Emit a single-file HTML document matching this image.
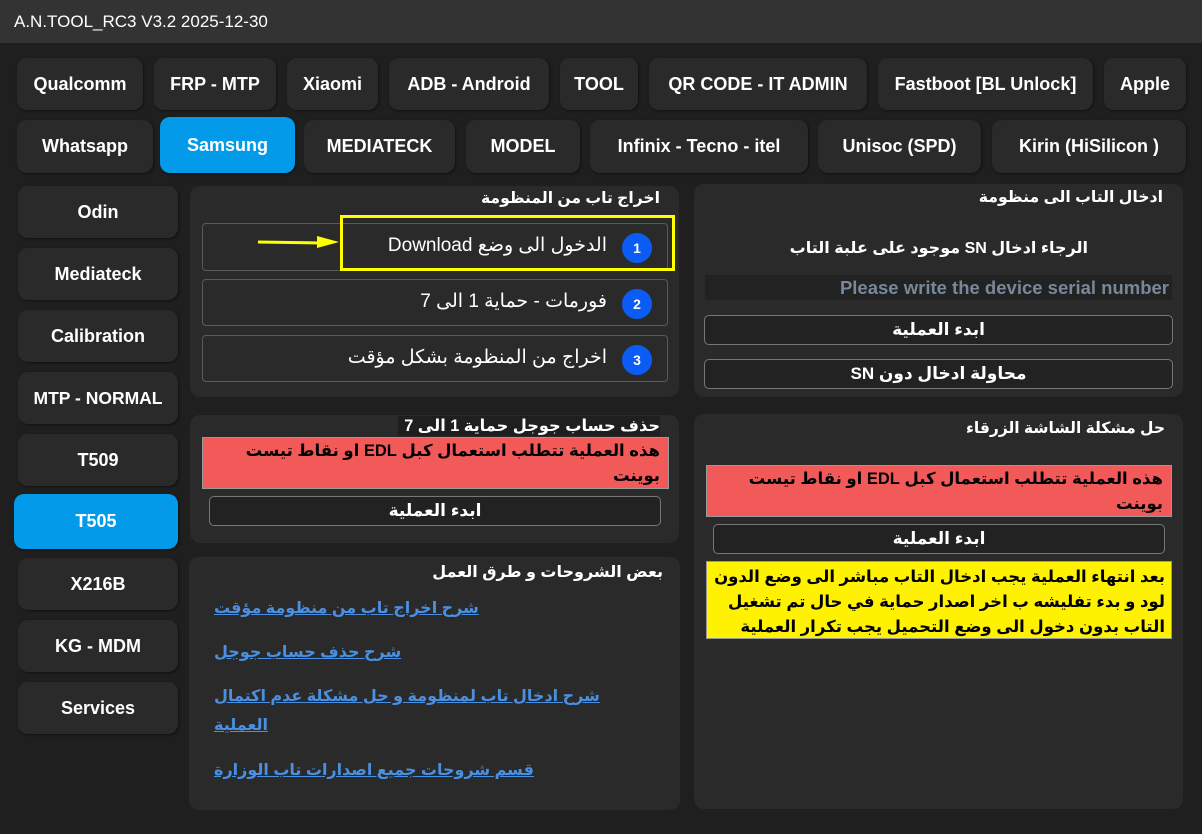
<!DOCTYPE html>
<html><head><meta charset="utf-8"><style>
*{margin:0;padding:0;box-sizing:border-box}
body{width:1202px;height:834px;background:#1f1f1f;font-family:"Liberation Sans","DejaVu Sans",sans-serif;color:#fff;position:relative;overflow:hidden}
.a{position:absolute}
.tb{left:0;top:0;width:1202px;height:43px;background:#333;font-size:17px;padding:12px 0 0 14px;color:#fff}
.t{position:absolute;background:#2a2a2a;border-radius:10px;font-weight:bold;font-size:18px;display:flex;align-items:center;justify-content:center;box-shadow:1px 1px 2px #111;white-space:nowrap}
.sel{background:#039be9}
.p{position:absolute;background:#2a2a2a;border-radius:10px}
.h{position:absolute;font-weight:bold;font-size:16px;direction:rtl;white-space:nowrap}
.ob{position:absolute;border:1px solid #5a5a5a;border-radius:4px;background:#2a2a2a}
.ob span{position:absolute;right:60px;top:10px;font-size:19px;direction:rtl;white-space:nowrap}
.c{position:absolute;right:15px;top:9px;width:30px;height:30px;border-radius:50%;background:#0a5cf5;font-size:14px;font-weight:bold;display:flex;align-items:center;justify-content:center}
.bt{position:absolute;border:1px solid #777;border-radius:5px;background:#222;font-weight:bold;font-size:17px;display:flex;align-items:center;justify-content:center;direction:rtl}
.red{position:absolute;background:#f25a5a;border:1px solid #999;color:#000;font-weight:bold;font-size:16.5px;direction:rtl;padding:1px 8px 0;line-height:25px;white-space:nowrap}
.yel{position:absolute;background:#fff200;border:1px solid #999;color:#000;font-weight:bold;font-size:16.5px;direction:rtl;padding:3px 6px 0;line-height:25px;white-space:nowrap}
.ln{position:absolute;left:214px;color:#4a90e2;text-decoration:underline;font-weight:bold;font-size:16px;direction:rtl;white-space:nowrap}
</style></head><body>
<div class="a tb">A.N.TOOL_RC3 V3.2 2025-12-30</div>
<div class="t" style="left:17px;top:58px;width:126px;height:52px">Qualcomm</div>
<div class="t" style="left:154px;top:58px;width:122px;height:52px">FRP - MTP</div>
<div class="t" style="left:287px;top:58px;width:91px;height:52px">Xiaomi</div>
<div class="t" style="left:389px;top:58px;width:160px;height:52px">ADB - Android</div>
<div class="t" style="left:560px;top:58px;width:78px;height:52px">TOOL</div>
<div class="t" style="left:649px;top:58px;width:218px;height:52px">QR CODE - IT ADMIN</div>
<div class="t" style="left:878px;top:58px;width:215px;height:52px">Fastboot [BL Unlock]</div>
<div class="t" style="left:1104px;top:58px;width:82px;height:52px">Apple</div>
<div class="t" style="left:17px;top:120px;width:136px;height:53px">Whatsapp</div>
<div class="t sel" style="left:160px;top:117px;width:135px;height:56px">Samsung</div>
<div class="t" style="left:304px;top:120px;width:151px;height:53px">MEDIATECK</div>
<div class="t" style="left:466px;top:120px;width:114px;height:53px">MODEL</div>
<div class="t" style="left:590px;top:120px;width:218px;height:53px">Infinix - Tecno - itel</div>
<div class="t" style="left:818px;top:120px;width:163px;height:53px">Unisoc (SPD)</div>
<div class="t" style="left:992px;top:120px;width:194px;height:53px">Kirin (HiSilicon )</div>

<div class="t" style="left:18px;top:186px;width:160px;height:52px">Odin</div>
<div class="t" style="left:18px;top:248px;width:160px;height:52px">Mediateck</div>
<div class="t" style="left:18px;top:310px;width:160px;height:52px">Calibration</div>
<div class="t" style="left:18px;top:372px;width:160px;height:52px;font-size:17.5px">MTP - NORMAL</div>
<div class="t" style="left:18px;top:434px;width:160px;height:52px">T509</div>
<div class="t sel" style="left:14px;top:494px;width:164px;height:55px">T505</div>
<div class="t" style="left:18px;top:558px;width:160px;height:52px">X216B</div>
<div class="t" style="left:18px;top:620px;width:160px;height:52px">KG - MDM</div>
<div class="t" style="left:18px;top:682px;width:160px;height:52px">Services</div>

<div class="p" style="left:190px;top:186px;width:489px;height:211px"></div>
<div class="h" style="right:542px;top:189px;font-size:15.6px">اخراج تاب من المنظومة</div>
<div class="ob" style="left:202px;top:223px;width:466px;height:48px"><span>الدخول الى وضع Download</span><div class="c">1</div></div>
<div class="ob" style="left:202px;top:279px;width:466px;height:47px"><span>فورمات - حماية 1 الى 7</span><div class="c">2</div></div>
<div class="ob" style="left:202px;top:335px;width:466px;height:47px"><span>اخراج من المنظومة بشكل مؤقت</span><div class="c">3</div></div>
<div class="a" style="left:340px;top:215px;width:335px;height:56px;border:3px solid #ffff00"></div>
<svg class="a" style="left:255px;top:234px" width="86" height="16"><path d="M3 8 L68 9" stroke="#ffff00" stroke-width="3"/><path d="M62 2 L84 8 L62 14 Z" fill="#ffff00"/></svg>

<div class="p" style="left:694px;top:184px;width:489px;height:213px"></div>
<div class="h" style="right:39px;top:187px;font-size:15.7px">ادخال التاب الى منظومة</div>
<div class="h" style="right:114px;top:238px;font-size:16px">الرجاء ادخال SN موجود على علبة التاب</div>
<div class="a" style="left:705px;top:275px;width:467px;height:25px;background:#222;color:#778899;font-weight:bold;font-size:18.5px;text-align:right;padding:2px 3px 0 0;white-space:nowrap">Please write the device serial number</div>
<div class="bt" style="left:704px;top:315px;width:469px;height:30px">ابدء العملية</div>
<div class="bt" style="left:704px;top:359px;width:469px;height:30px">محاولة ادخال دون SN</div>

<div class="p" style="left:190px;top:415px;width:489px;height:128px"></div>
<div class="h" style="right:542px;top:416px;background:#1f1f1f;padding:0 0 0 6px;font-size:16.2px">حذف حساب جوجل حماية 1 الى 7</div>
<div class="red" style="left:202px;top:437px;width:467px;height:52px">هذه العملية تتطلب استعمال كبل EDL او نقاط تيست<br>بوينت</div>
<div class="bt" style="left:209px;top:496px;width:452px;height:30px">ابدء العملية</div>

<div class="p" style="left:694px;top:414px;width:489px;height:395px"></div>
<div class="h" style="right:37px;top:419px;font-size:15.5px">حل مشكلة الشاشة الزرقاء</div>
<div class="red" style="left:706px;top:465px;width:466px;height:52px">هذه العملية تتطلب استعمال كبل EDL او نقاط تيست<br>بوينت</div>
<div class="bt" style="left:713px;top:524px;width:452px;height:30px">ابدء العملية</div>
<div class="yel" style="left:706px;top:561px;width:466px;height:78px">بعد انتهاء العملية يجب ادخال التاب مباشر الى وضع الدون<br>لود و بدء تفليشه ب اخر اصدار حماية في حال تم تشغيل<br>التاب بدون دخول الى وضع التحميل يجب تكرار العملية</div>

<div class="p" style="left:189px;top:557px;width:491px;height:253px"></div>
<div class="h" style="right:539px;top:562px;font-size:16px">بعض الشروحات و طرق العمل</div>
<div class="ln" style="top:598px">شرح اخراج تاب من منظومة مؤقت</div>
<div class="ln" style="top:642px">شرح حذف حساب جوجل</div>
<div class="ln" style="top:686px">شرح ادخال تاب لمنظومة و حل مشكلة عدم اكتمال</div>
<div class="ln" style="top:715px">العملية</div>
<div class="ln" style="top:760px">قسم شروحات جميع اصدارات تاب الوزارة</div>
</body></html>
